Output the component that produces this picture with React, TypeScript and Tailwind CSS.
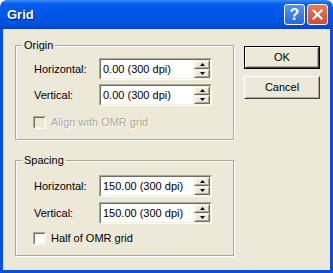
import React from 'react';

const Arrow: React.FC<{ up?: boolean }> = ({ up }) => (
  <svg width="5" height="3" viewBox="0 0 5 3" className="block">
    {up ? <path d="M2.5 0 L5 3 L0 3 Z" fill="#000" /> : <path d="M0 0 L5 0 L2.5 3 Z" fill="#000" />}
  </svg>
);

const SpinButton: React.FC<{ up?: boolean }> = ({ up }) => (
  <div className="flex-1 border border-t-[#F1EFE2] border-l-[#F1EFE2] border-b-[#716F64] border-r-[#716F64]">
    <div className="h-full flex items-center justify-center bg-[#ECE9D8] border border-t-white border-l-white border-b-[#ACA899] border-r-[#ACA899]">
      <Arrow up={up} />
    </div>
  </div>
);

const SpinInput: React.FC<{ value: string }> = ({ value }) => (
  <div className="w-[113px] h-[22px] border border-t-[#ACA899] border-l-[#ACA899] border-b-white border-r-white">
    <div className="h-full flex bg-white border border-t-[#716F64] border-l-[#716F64] border-b-[#F1EFE2] border-r-[#F1EFE2]">
      <div className="flex-1 flex items-center pl-[2px] text-black">{value}</div>
      <div className="w-[16px] flex flex-col">
        <SpinButton up />
        <SpinButton />
      </div>
    </div>
  </div>
);

const Row: React.FC<{ label: string; value: string }> = ({ label, value }) => (
  <div className="flex items-center">
    <div className="w-[65px]">{label}</div>
    <SpinInput value={value} />
  </div>
);

const Check: React.FC<{ label: string; disabled?: boolean }> = ({ label, disabled }) => (
  <div className="flex items-center h-[13px] -ml-[1px]">
    <div className="w-[13px] h-[13px] border border-t-[#ACA899] border-l-[#ACA899] border-b-white border-r-white">
      <div
        className={`h-full border border-t-[#716F64] border-l-[#716F64] border-b-[#F1EFE2] border-r-[#F1EFE2] ${
          disabled ? 'bg-[#ECE9D8]' : 'bg-white'
        }`}
      />
    </div>
    <span className={`ml-[5px] ${disabled ? 'text-[#ACA899] [text-shadow:1px_1px_0_#fff]' : ''}`}>{label}</span>
  </div>
);

const Button: React.FC<{ label: string; isDefault?: boolean }> = ({ label, isDefault }) => (
  <div className={`w-[76px] h-[23px] ${isDefault ? 'border border-black' : ''}`}>
    <div className="h-full border border-t-white border-l-white border-b-[#404040] border-r-[#404040]">
      <div className="h-full flex items-center justify-center bg-[#ECE9D8] border border-t-[#ECE9D8] border-l-[#ECE9D8] border-b-[#ACA899] border-r-[#ACA899]">
        {label}
      </div>
    </div>
  </div>
);

const App: React.FC = () => {
  return (
    <div className="w-[333px] h-[273px] flex flex-col font-['Liberation_Sans',Arial,sans-serif] text-[11px] text-black bg-white">
      {/* Title bar */}
      <div className="h-[29px] flex items-center rounded-t-[7px] bg-[linear-gradient(to_bottom,#3C8CF8_0%,#0A62F0_12%,#0058EE_30%,#0055E5_60%,#0050DC_85%,#0040C8_100%)] pl-[7px] pr-[5px]">
        <span className="flex-1 text-white font-bold text-[13px] [text-shadow:1px_1px_0_#0A1E7A]">Grid</span>
        <div className="w-[21px] h-[21px] rounded-[3px] border border-white bg-[linear-gradient(to_bottom,#4F95F8,#2A68E2)] flex items-center justify-center text-white font-bold text-[16px] leading-none">
          ?
        </div>
        <div className="ml-[2px] w-[21px] h-[21px] rounded-[3px] border border-white bg-[linear-gradient(to_bottom,#EC7B57,#D6482A)] flex items-center justify-center">
          <svg width="11" height="11" viewBox="0 0 11 11">
            <path d="M1.5 1.5 L9.5 9.5 M9.5 1.5 L1.5 9.5" stroke="#fff" strokeWidth="2.2" strokeLinecap="square" />
          </svg>
        </div>
      </div>

      {/* Body */}
      <div className="flex-1 flex bg-[#ECE9D8] border-x-[3px] border-b-[3px] border-[#0A4EDC] pl-[12px] pt-[10px]">
        <div className="w-[219px] flex flex-col">
          <fieldset className="border border-[#ACA899] shadow-[inset_1px_1px_0_#fff,1px_1px_0_#fff]">
            <legend className="ml-[6px] px-[2px] leading-[13px] bg-[#ECE9D8]">Origin</legend>
            <div className="pl-[18px] pt-[6px] pb-[10px]">
              <div className="flex flex-col gap-[4px]">
                <Row label="Horizontal:" value="0.00 (300 dpi)" />
                <Row label="Vertical:" value="0.00 (300 dpi)" />
              </div>
              <div className="mt-[10px]">
                <Check label="Align with OMR grid" disabled />
              </div>
            </div>
          </fieldset>

          <fieldset className="mt-[14px] border border-[#ACA899] shadow-[inset_1px_1px_0_#fff,1px_1px_0_#fff]">
            <legend className="ml-[6px] px-[2px] leading-[13px] bg-[#ECE9D8]">Spacing</legend>
            <div className="pl-[18px] pt-[8px] pb-[10px]">
              <div className="flex flex-col gap-[5px]">
                <Row label="Horizontal:" value="150.00 (300 dpi)" />
                <Row label="Vertical:" value="150.00 (300 dpi)" />
              </div>
              <div className="mt-[8px]">
                <Check label="Half of OMR grid" />
              </div>
            </div>
          </fieldset>
        </div>

        <div className="ml-[10px] pt-[7px] flex flex-col gap-[7px]">
          <Button label="OK" isDefault />
          <Button label="Cancel" />
        </div>
      </div>
    </div>
  );
};

export default App;
